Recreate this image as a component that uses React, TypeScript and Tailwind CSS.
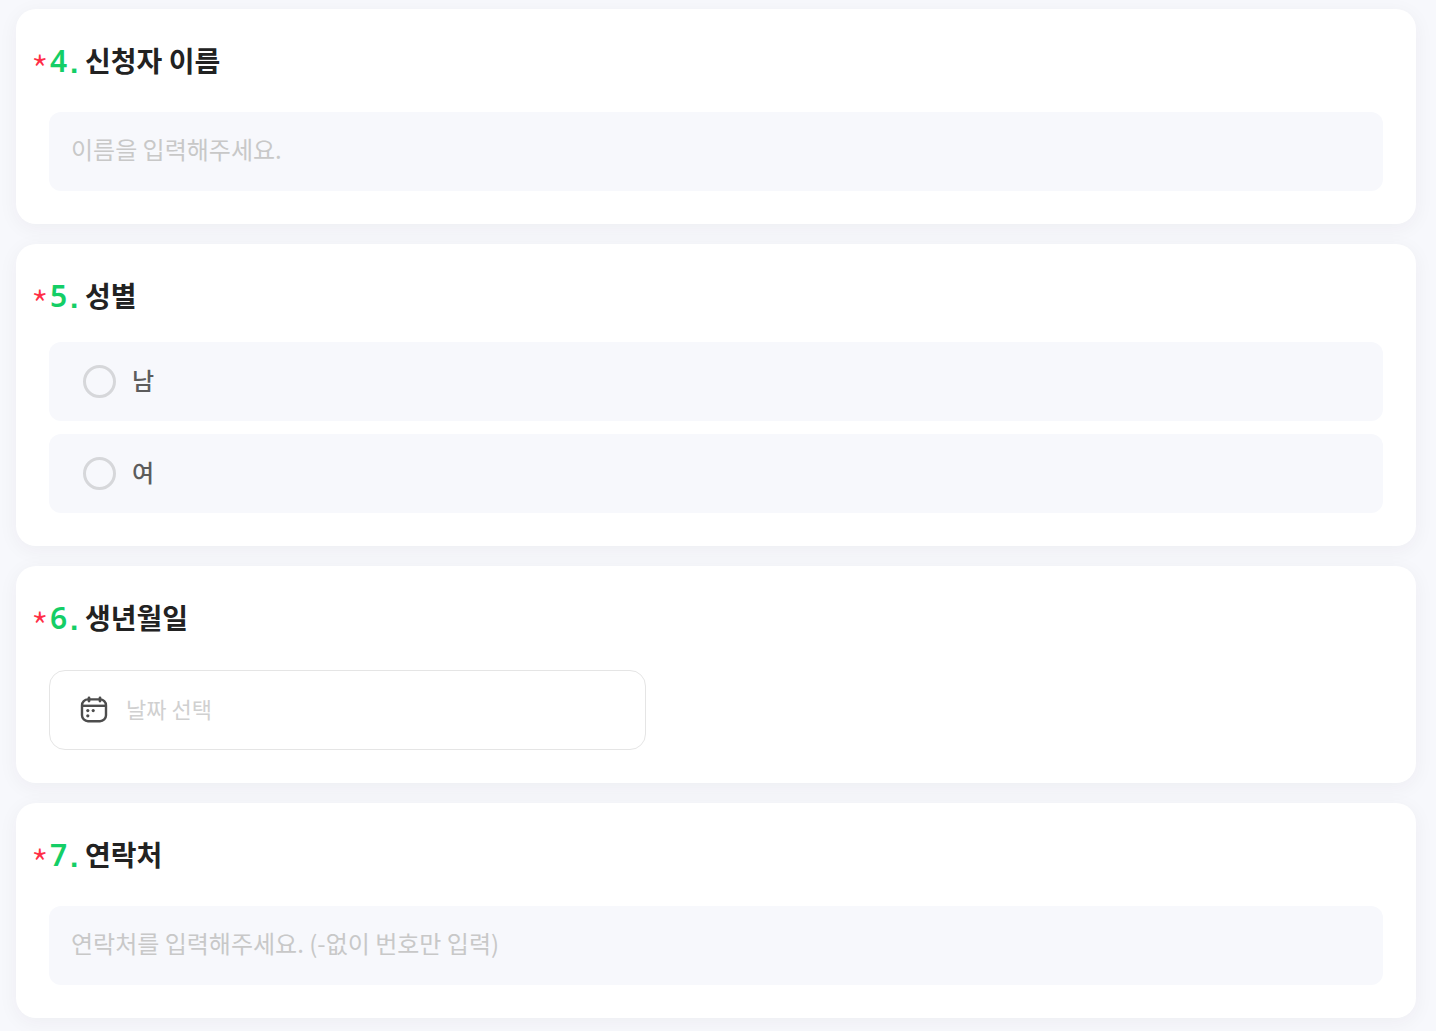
import type { ReactNode } from 'react'

function CalendarIcon() {
  return (
    <svg width="28" height="28" viewBox="0 0 28 28" fill="none" stroke="#4d4d4d" strokeWidth="2.4" aria-hidden="true">
      <rect x="2" y="3.4" width="24" height="21.8" rx="6" />
      <path d="M2 9.8h24" />
      <path d="M9 2v3M20 2v3" strokeLinecap="round" strokeWidth="2.8" />
      <g fill="#4d4d4d" stroke="none">
        <circle cx="7.8" cy="14.6" r="1.6" />
        <circle cx="13.2" cy="14.6" r="1.6" />
        <circle cx="7.8" cy="19.8" r="1.6" />
      </g>
    </svg>
  )
}

function Card({ children }: { children: ReactNode }) {
  return (
    <section className="rounded-[20px] bg-white px-[33px] pt-8 pb-[33px] shadow-[0_4px_20px_rgba(60,40,60,0.05)]">
      {children}
    </section>
  )
}

function Title({ no, children }: { no: number; children: ReactNode }) {
  return (
    <span className="-ml-[18px] flex h-10 items-center text-[28px] leading-10 font-bold text-[#222]">
      <span className="w-[19px] pt-4 text-[40px] font-light text-[#ff2d46]">*</span>
      <span className="w-5 font-['Noto_Sans'] text-[30px] font-semibold text-[#14ce66]">{no}</span>
      <span className="w-[15px] pt-1 font-['Liberation_Sans'] text-[30px] font-bold text-[#14ce66]">.</span>
      <span className="pb-0.5">{children}</span>
    </span>
  )
}

function TextQuestion({ no, id, title, placeholder, type = 'text' }: {
  no: number
  id: string
  title: string
  placeholder: string
  type?: string
}) {
  return (
    <Card>
      <label htmlFor={id}>
        <Title no={no}>{title}</Title>
      </label>
      <input
        id={id}
        type={type}
        placeholder={placeholder}
        className="mt-[31px] block h-[79px] w-full rounded-xl bg-[#f7f8fc] px-[22px] pb-1.5 text-2xl outline-none placeholder:text-[#c8c8c8]"
      />
    </Card>
  )
}

export default function App() {
  return (
    <main className="flex min-h-screen flex-col gap-5 bg-[#f7f8fc] pt-[9px] pr-5 pb-[13px] pl-4 font-['Noto_Sans_CJK_KR',sans-serif] text-[#222]">
      <TextQuestion no={4} id="name" title="신청자 이름" placeholder="이름을 입력해주세요." />

      <Card>
        <fieldset>
          <legend>
            <Title no={5}>성별</Title>
          </legend>
          <div className="mt-[26px] flex flex-col gap-[13px]">
            {['남', '여'].map((gender) => (
              <label key={gender} className="flex h-[79px] items-center gap-4 rounded-xl bg-[#f7f8fc] px-[34px]">
                <input
                  type="radio"
                  name="gender"
                  value={gender}
                  className="size-[33px] appearance-none rounded-full border-3 border-[#d6d7da] checked:border-8 checked:border-[#14ce66]"
                />
                <span className="pb-1 text-2xl font-medium text-[#5c5c5c]">{gender}</span>
              </label>
            ))}
          </div>
        </fieldset>
      </Card>

      <Card>
        <label htmlFor="birth">
          <Title no={6}>생년월일</Title>
        </label>
        <div className="mt-8 flex h-20 w-full max-w-[597px] items-center gap-[18px] rounded-2xl border border-[#e5e5e5] px-[30px]">
          <CalendarIcon />
          <input
            id="birth"
            type="text"
            placeholder="날짜 선택"
            className="h-full min-w-0 flex-1 pb-1 text-[22px] outline-none placeholder:text-[#d0d0d0]"
          />
        </div>
      </Card>

      <TextQuestion no={7} id="phone" type="tel" title="연락처" placeholder="연락처를 입력해주세요. (-없이 번호만 입력)" />
    </main>
  )
}
